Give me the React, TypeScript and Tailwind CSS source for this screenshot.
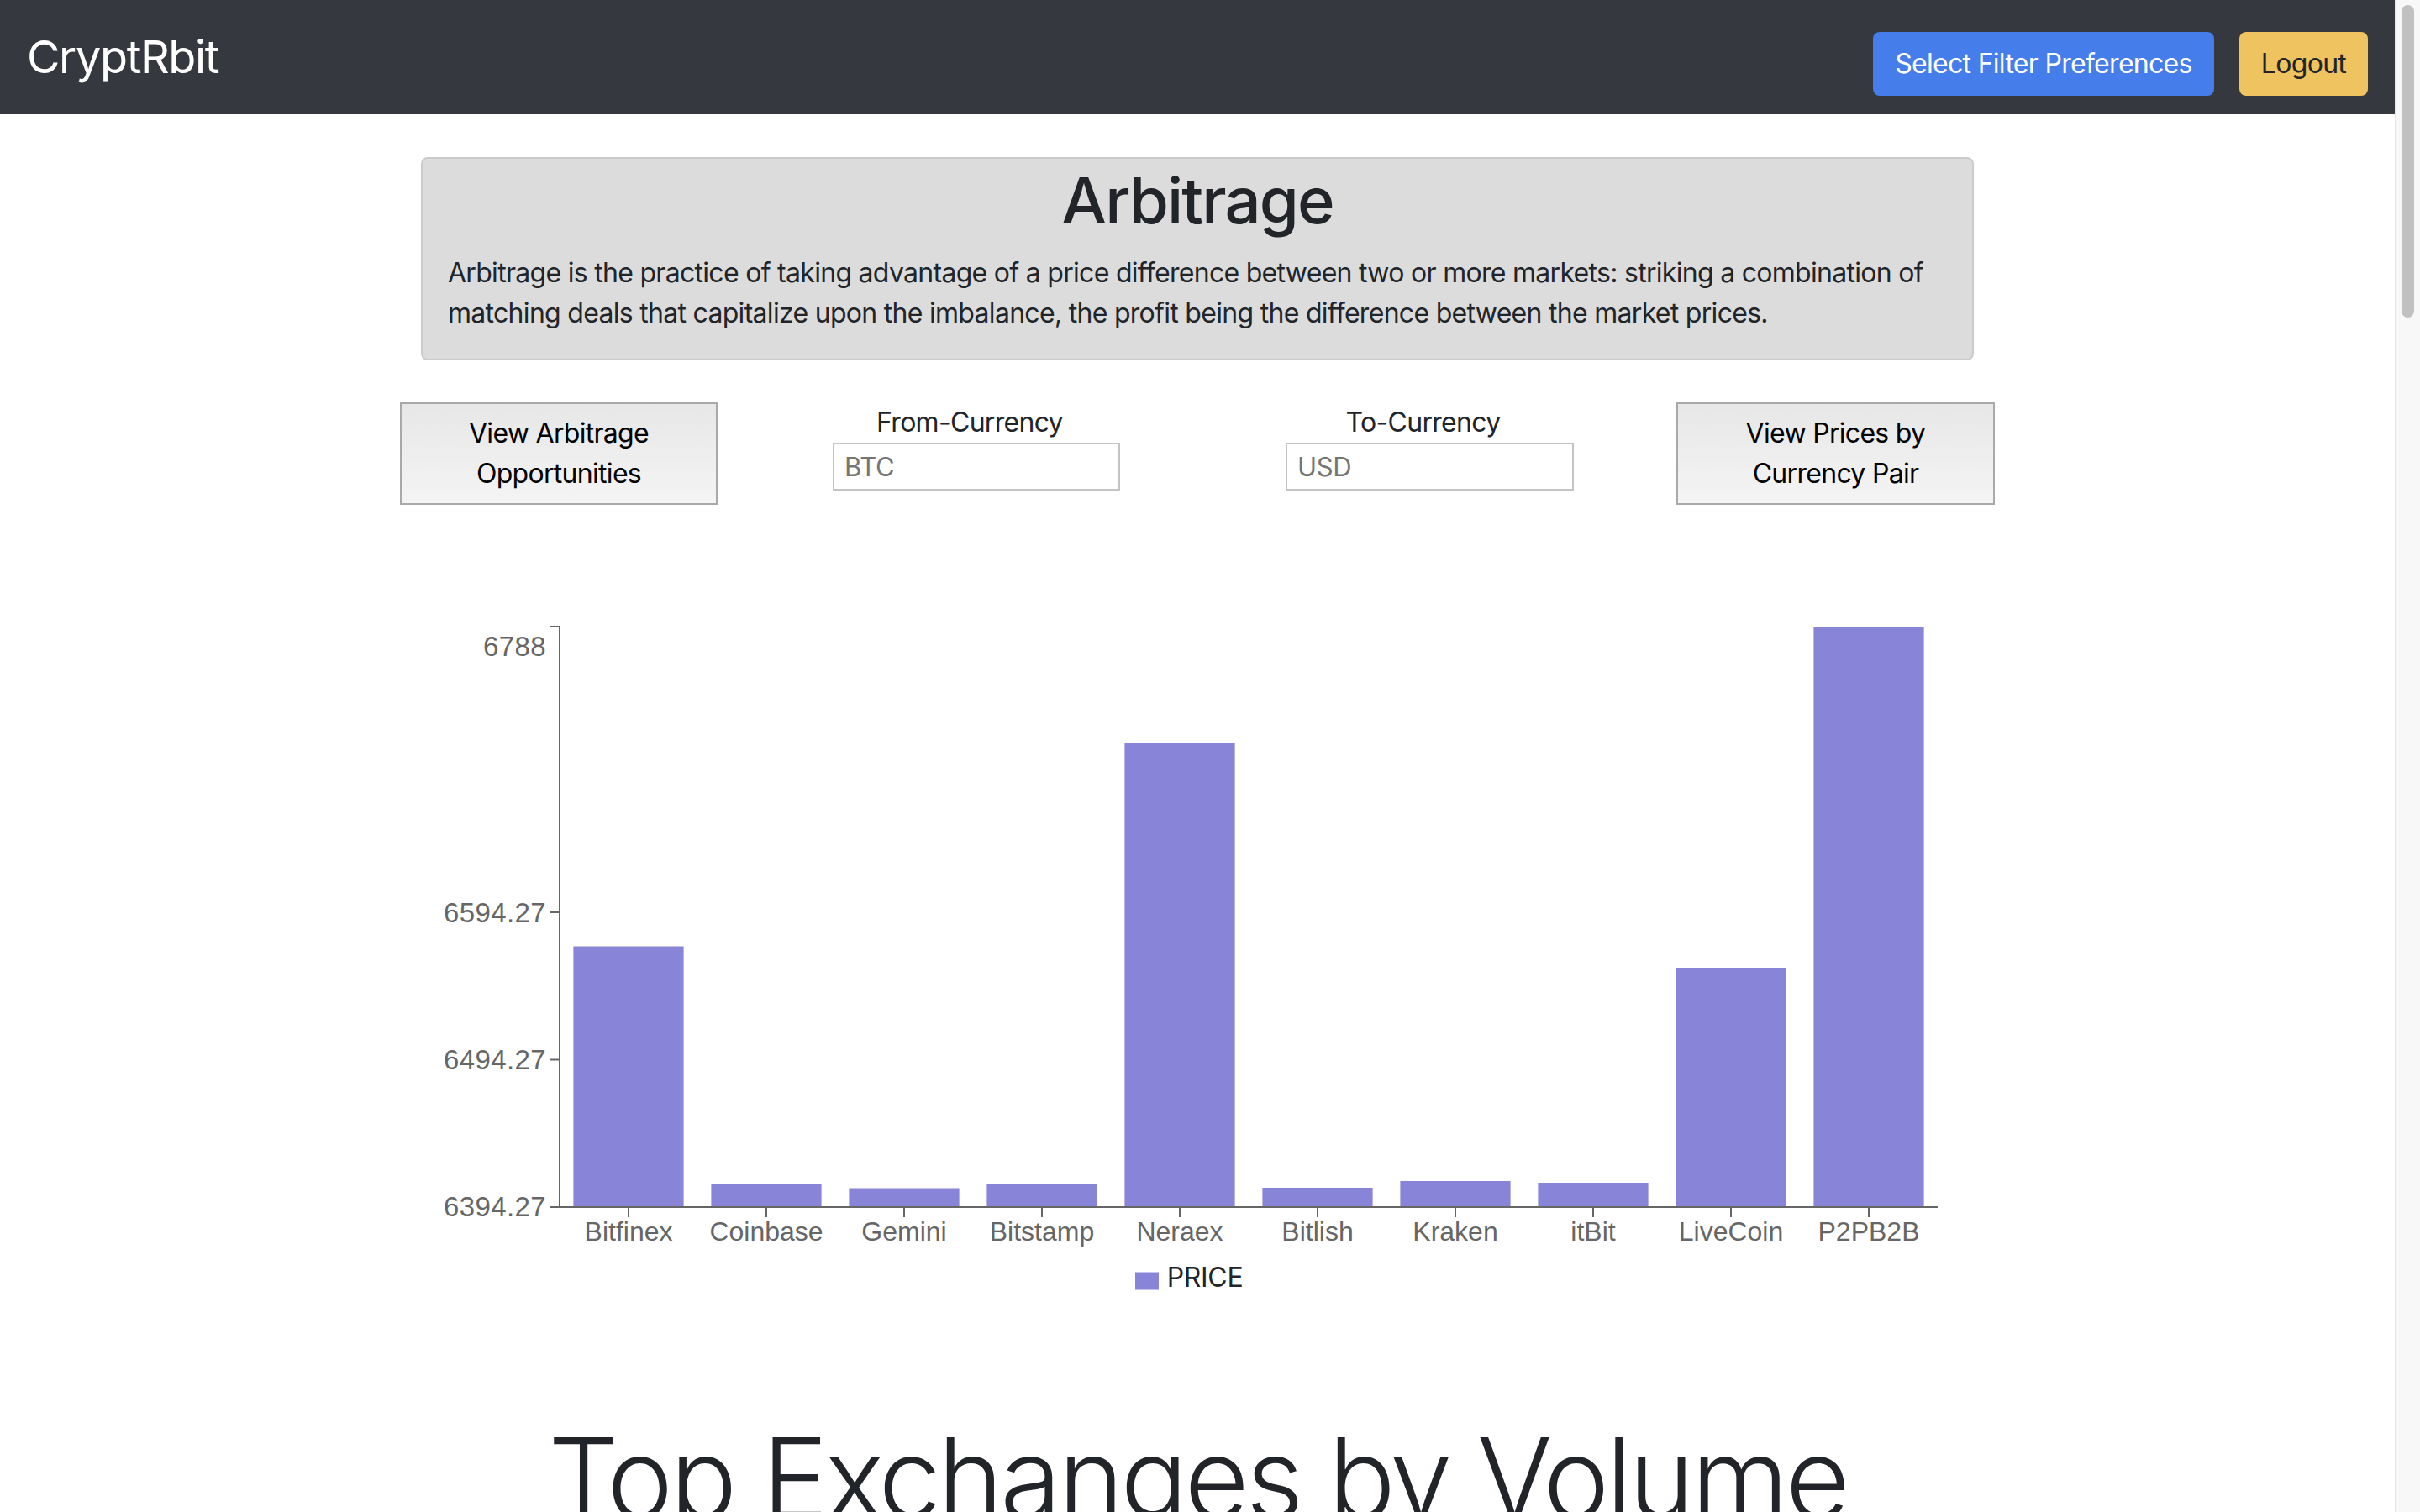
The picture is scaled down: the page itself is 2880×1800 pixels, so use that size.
import React from "react";

const bars: { name: string; h: number }[] = [
  { name: "Bitfinex", h: 310.5 },
  { name: "Coinbase", h: 27 },
  { name: "Gemini", h: 22.5 },
  { name: "Bitstamp", h: 28 },
  { name: "Neraex", h: 552 },
  { name: "Bitlish", h: 23 },
  { name: "Kraken", h: 31 },
  { name: "itBit", h: 29 },
  { name: "LiveCoin", h: 285 },
  { name: "P2PB2B", h: 691 },
];

const yTicks = [
  { label: "6788", tick: 26, base: 61 },
  { label: "6594.27", tick: 366, base: 378 },
  { label: "6494.27", tick: 541.5, base: 553 },
  { label: "6394.27", tick: 717, base: 728 },
];

function Chart() {
  const x0 = 206;
  const band = 164;
  const axisY = 717;
  return (
    <svg
      width={1900}
      height={776}
      className="ml-[460px] block"
      style={{ fontFamily: "'Liberation Sans', Arial, sans-serif", letterSpacing: 0 }}
    >
      {bars.map((b, i) => (
        <rect key={b.name} x={x0 + band * i + 16.4} y={axisY - b.h} width={131.2} height={b.h} fill="#8884d8" />
      ))}
      <line x1={x0} y1={26} x2={x0} y2={axisY} stroke="#666" strokeWidth={2} />
      {yTicks.map((t) => (
        <g key={t.label}>
          <line x1={194} y1={t.tick} x2={x0} y2={t.tick} stroke="#666" strokeWidth={2} />
          <text x={190} y={t.base} textAnchor="end" fontSize={33} fill="#666" style={{ letterSpacing: "0.4px" }}>
            {t.label}
          </text>
        </g>
      ))}
      <line x1={x0} y1={axisY} x2={x0 + band * 10} y2={axisY} stroke="#666" strokeWidth={2} />
      {bars.map((b, i) => (
        <g key={b.name + "t"}>
          <line x1={x0 + band * i + 82} y1={axisY} x2={x0 + band * i + 82} y2={axisY + 12} stroke="#666" strokeWidth={2} />
          <text x={x0 + band * i + 82} y={757} textAnchor="middle" fontSize={32} fill="#666">
            {b.name}
          </text>
        </g>
      ))}
    </svg>
  );
}

export default function App() {
  return (
    <div className="flex h-[1800px] w-[2880px] overflow-hidden bg-white text-[#212529] [font-family:Inter,'Noto_Sans',sans-serif]">
      <div className="flex min-w-0 flex-1 flex-col">
        <nav className="flex h-[136px] shrink-0 items-center justify-between bg-[#35393f] px-[32px]">
          <span className="text-[54px] leading-none tracking-[-0.025em] text-white">CryptRbit</span>
          <div className="mt-[16px] flex gap-[30px]">
            <button className="h-[76px] w-[406px] rounded-[8px] bg-[#457deb] text-[32px] tracking-[-0.022em] text-white">
              Select Filter Preferences
            </button>
            <button className="h-[76px] w-[153px] rounded-[8px] bg-[#efc35f] text-[32px] tracking-[-0.022em] text-[#212529]">
              Logout
            </button>
          </div>
        </nav>

        <main className="flex flex-col">
          <section className="mx-auto mt-[51px] w-[1848px] rounded-[8px] border-2 border-[#cbcbcb] bg-[#dcdcdc] px-[30px] pb-[30px] pt-[9px]">
            <h1 className="text-center text-[76px] font-medium leading-[80px] tracking-[-0.025em]">Arbitrage</h1>
            <p className="mt-[23px] text-[32px] leading-[48px] tracking-[-0.022em]">
              <span className="block whitespace-nowrap">
                Arbitrage is the practice of taking advantage of a price difference between two or more markets: striking a combination of
              </span>
              <span className="block whitespace-nowrap">
                matching deals that capitalize upon the imbalance, the profit being the difference between the market prices.
              </span>
            </p>
          </section>

          <div className="mx-auto mt-[50px] flex w-[1898px] items-start">
            <button className="h-[122px] w-[378px] border-2 border-[#a9a9a9] bg-linear-to-b from-[#e7e7e7] to-[#f4f4f4] text-[32px] leading-[48px] tracking-[-0.022em] text-black">
              View Arbitrage
              <br />
              Opportunities
            </button>
            <div className="ml-[137px] flex w-[342px] flex-col">
              <label className="pr-[16px] text-center text-[32px] leading-[48px] tracking-[-0.022em]">From-Currency</label>
              <input
                placeholder="BTC"
                className="h-[57px] border-2 border-[#c4c4c4] bg-white px-[12px] text-[31px] tracking-[-0.01em] outline-none placeholder:text-[#757575]"
              />
            </div>
            <div className="ml-[197px] flex w-[343px] flex-col">
              <label className="pr-[16px] text-center text-[32px] leading-[48px] tracking-[-0.022em]">To-Currency</label>
              <input
                placeholder="USD"
                className="h-[57px] border-2 border-[#c4c4c4] bg-white px-[12px] text-[31px] tracking-[-0.01em] outline-none placeholder:text-[#757575]"
              />
            </div>
            <button className="ml-[122px] h-[122px] w-[379px] border-2 border-[#a9a9a9] bg-linear-to-b from-[#e7e7e7] to-[#f4f4f4] text-[32px] leading-[48px] tracking-[-0.022em] text-black">
              View Prices by
              <br />
              Currency Pair
            </button>
          </div>

          <div className="mt-[119px]">
            <Chart />
          </div>

          <div className="mt-[1px] flex justify-center">
            <div className="flex items-center pr-[20px]">
              <svg width={28} height={28} viewBox="0 0 32 32" className="mt-[8px]">
                <path d="M0,4h32v24h-32z" fill="#8884d8" />
              </svg>
              <span className="ml-[10px] text-[32px] leading-[48px] tracking-[-0.01em]">PRICE</span>
            </div>
          </div>

          <h2 className="mt-[135px] text-center text-[133px] font-light leading-[1.2] tracking-[-0.03em]">
            Top Exchanges by Volume
          </h2>
        </main>
      </div>
      <div className="w-[30px] shrink-0 border-l border-[#e6e6e6] bg-[#f8f8f8] pt-[6px]">
        <div className="mx-auto h-[372px] w-[15px] rounded-full bg-[#c1c1c1]" />
      </div>
    </div>
  );
}
